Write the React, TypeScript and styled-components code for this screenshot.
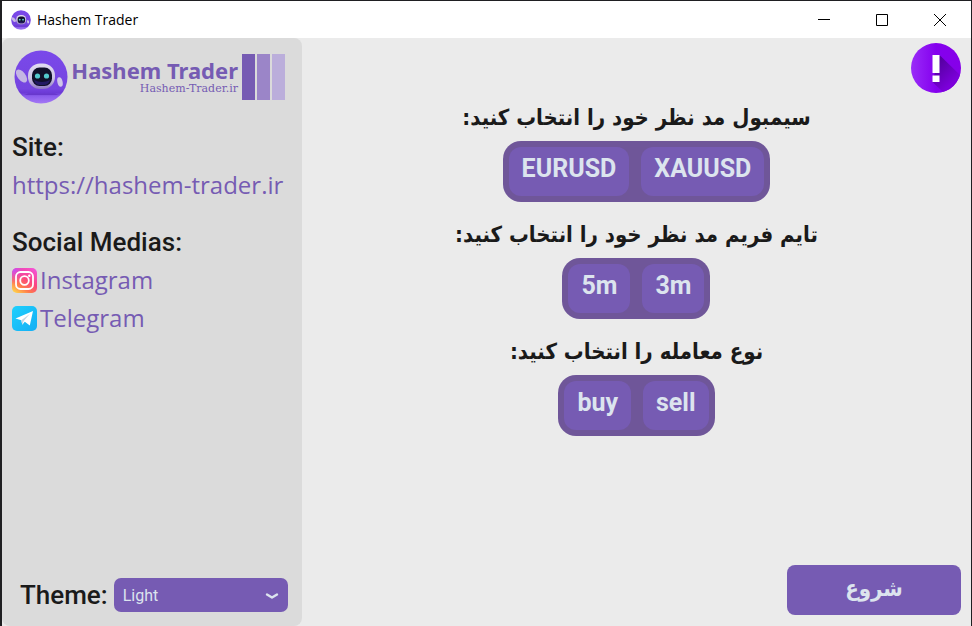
import React from "react";
import styled, { createGlobalStyle } from "styled-components";

const color = {
  purple: "#765bb3",
  purpleDark: "#6f5699",
  onPurple: "#dce4ee",
  ink: "#1a1a1a",
  side: "#dbdbdb",
  page: "#ebebeb",
};

const GlobalStyle = createGlobalStyle`
  * { box-sizing: border-box; }
  body { margin: 0; background: ${color.page}; }
  button, select { font: inherit; border: 0; cursor: pointer; }
`;

const Window = styled.div`
  min-height: 100vh;
  display: flex;
  flex-direction: column;
  border: solid #1f1f22;
  border-width: 1px 1px 0 2px;
  background: ${color.page};
  color: ${color.ink};
  font-family: Roboto, "DejaVu Sans", sans-serif;
`;

const TitleBar = styled.header`
  display: flex;
  align-items: center;
  gap: 6px;
  height: 37px;
  padding: 0 2px 0 9px;
  background: #fff;
  color: #000;
  font: 14px/20px "Open Sans", sans-serif;
`;

const WindowButtons = styled.div`
  display: flex;
  align-self: stretch;
  margin-left: auto;
`;

const WindowButton = styled.button`
  width: 58px;
  display: grid;
  place-items: center;
  padding: 0;
  background: transparent;
`;

const Body = styled.div`
  flex: 1;
  display: flex;
`;

const Sidebar = styled.aside`
  flex: 0 0 300px;
  display: flex;
  flex-direction: column;
  padding: 12px 14px 14px 10px;
  border-radius: 8px;
  background: ${color.side};
`;

const Brand = styled.div`
  display: flex;
  align-items: center;
  padding: 0 3px 0 2px;
  margin-bottom: 24px;
  color: ${color.purple};
`;

const BrandText = styled.div`
  flex: 1;
  display: flex;
  flex-direction: column;
  align-items: flex-end;
  margin-right: 4px;
  white-space: nowrap;
`;

const BrandName = styled.div`
  font: 700 22px/24px "Noto Sans", sans-serif;
`;

const BrandSite = styled.div`
  font: 11px/14px "DejaVu Serif", serif;
`;

const Bars = styled.div`
  display: flex;
  gap: 2px;
`;

const Bar = styled.span<{ $shade: string }>`
  width: 13px;
  height: 46px;
  background: ${(p) => p.$shade};
`;

const SideSection = styled.section`
  margin-bottom: 19px;
`;

const SideHeading = styled.h2`
  margin: 0;
  font: 500 26px/38px Roboto, sans-serif;
`;

const SideLink = styled.a`
  display: flex;
  align-items: center;
  gap: 3px;
  color: ${color.purple};
  font: 24px/38px "Open Sans", sans-serif;
  text-decoration: none;
`;

const ThemeRow = styled.div`
  display: flex;
  align-items: center;
  gap: 6px;
  margin-top: auto;
  padding-left: 8px;
`;

const ThemeLabel = styled.label`
  font: 500 26px/34px Roboto, sans-serif;
`;

const SelectBox = styled.div`
  position: relative;
  flex: 1;
  svg {
    position: absolute;
    right: 9px;
    top: 13px;
    pointer-events: none;
  }
`;

const ThemeSelect = styled.select`
  display: block;
  width: 100%;
  height: 34px;
  padding: 0 28px 0 9px;
  appearance: none;
  border-radius: 7px;
  background: ${color.purple};
  color: ${color.onPurple};
  font: 16px Roboto, sans-serif;
`;

const Main = styled.main`
  flex: 1;
  display: flex;
  flex-direction: column;
  padding: 5px 10px 11px;
`;

const InfoButton = styled.button`
  align-self: flex-end;
  width: 50px;
  height: 50px;
  padding: 0;
  border-radius: 50%;
  background: transparent;
`;

const Choices = styled.div`
  display: flex;
  flex-direction: column;
  align-items: center;
  gap: 10px;
  margin-top: 2px;
`;

const Choice = styled.section`
  display: flex;
  flex-direction: column;
  align-items: center;
`;

const Question = styled.h2`
  margin: 0;
  font: 700 22px/46px "DejaVu Sans Condensed", "DejaVu Sans", sans-serif;
`;

const Segments = styled.div`
  display: flex;
  gap: 12px;
  padding: 6px;
  border-radius: 18px;
  background: ${color.purpleDark};
`;

const Segment = styled.button`
  height: 49px;
  padding: 0 13px 6px;
  border-radius: 12px;
  background: ${color.purple};
  color: ${color.onPurple};
  font: 700 25px Roboto, sans-serif;
`;

const StartButton = styled.button`
  align-self: flex-end;
  width: 174px;
  height: 50px;
  margin-top: auto;
  padding: 0 0 4px;
  border-radius: 8px;
  background: ${color.purple};
  color: ${color.onPurple};
  font: 700 22px "DejaVu Sans Condensed", "DejaVu Sans", sans-serif;
`;

function Robot({ size, id }: { size: number; id: string }) {
  return (
    <svg width={size} height={size} viewBox="0 0 54 54" aria-hidden="true">
      <defs>
        <linearGradient id={`${id}-bg`} x1="0" y1="0" x2="0" y2="1">
          <stop offset="0" stopColor="#7a49ea" />
          <stop offset=".72" stopColor="#7544e0" />
          <stop offset=".8" stopColor="#6c3ad6" />
          <stop offset=".86" stopColor="#8a5cec" />
          <stop offset="1" stopColor="#a478f5" />
        </linearGradient>
        <linearGradient id={`${id}-shell`} x1="0" y1="0" x2="0" y2="1">
          <stop offset="0" stopColor="#e2dcf2" />
          <stop offset=".6" stopColor="#cbc1e2" />
          <stop offset="1" stopColor="#8e77c4" />
        </linearGradient>
      </defs>
      <circle cx="27" cy="27" r="26.5" fill={`url(#${id}-bg)`} />
      <path d="M10 45h35l-4-1.500H14z" fill="#5c2bc0" opacity=".6" />
      <ellipse cx="7.500" cy="26" rx="4" ry="7.500" transform="rotate(-38 7.500 26)" fill="#c4b6e3" />
      <ellipse cx="46" cy="32" rx="2.600" ry="4.800" transform="rotate(-14 46 32)" fill="#cfc5e8" />
      <rect x="14" y="13.500" width="27" height="25.500" rx="12" fill={`url(#${id}-shell)`} />
      <rect x="18" y="17.500" width="20" height="18.500" rx="7.500" fill="#11102a" />
      <path d="M20 30q8 4 16 0-1 5-7 5h-3q-5 0-6-5z" fill="#231a63" />
      <circle cx="23.500" cy="26" r="2.600" fill="#53c9cd" />
      <circle cx="32.500" cy="26" r="2.600" fill="#53c9cd" />
    </svg>
  );
}

function InstagramIcon() {
  return (
    <svg width="25" height="25" viewBox="0 0 25 25" aria-hidden="true">
      <defs>
        <linearGradient id="ig-base" x1=".1" y1="1" x2=".8" y2="0">
          <stop offset="0" stopColor="#ffd84a" />
          <stop offset=".3" stopColor="#ff7a4c" />
          <stop offset=".6" stopColor="#fa4580" />
          <stop offset="1" stopColor="#f451d4" />
        </linearGradient>
        <radialGradient id="ig-corner" cx=".05" cy=".05" r=".6">
          <stop offset="0" stopColor="#c250ff" />
          <stop offset="1" stopColor="#f24bc4" stopOpacity="0" />
        </radialGradient>
      </defs>
      <rect width="25" height="25" rx="5" fill="url(#ig-base)" />
      <rect width="25" height="25" rx="5" fill="url(#ig-corner)" />
      <rect x="4" y="4" width="17" height="17" rx="4.500" fill="none" stroke="#fff" strokeWidth="1.800" />
      <circle cx="12.500" cy="12.500" r="4.300" fill="none" stroke="#fff" strokeWidth="1.800" />
      <circle cx="17.300" cy="7.800" r="1.200" fill="#fff" />
    </svg>
  );
}

function TelegramIcon() {
  return (
    <svg width="25" height="25" viewBox="0 0 25 25" aria-hidden="true">
      <defs>
        <linearGradient id="tg-base" x1="0" y1="0" x2="1" y2="1">
          <stop offset="0" stopColor="#1fd0fd" />
          <stop offset="1" stopColor="#14aef4" />
        </linearGradient>
      </defs>
      <rect width="25" height="25" rx="5" fill="url(#tg-base)" />
      <path d="M3.500 12.500 21 5l-3.200 14.500-5-3.700-2.500 3-1-4.500z" fill="#fff" />
      <path d="m9.300 14.300 8.700-6.500-6.300 7.300-1.400 3.700z" fill="#c5d5e2" />
    </svg>
  );
}

function InfoIcon() {
  return (
    <svg width="50" height="50" viewBox="0 0 50 50" aria-hidden="true">
      <defs>
        <linearGradient id="info-bg">
          <stop offset="0" stopColor="#9a2cf8" />
          <stop offset=".5" stopColor="#8400ee" />
          <stop offset="1" stopColor="#8600e8" />
        </linearGradient>
        <linearGradient id="info-shadow" gradientUnits="userSpaceOnUse" x1="25" y1="20" x2="43" y2="38">
          <stop offset="0" stopColor="#5400a0" />
          <stop offset="1" stopColor="#7c00da" />
        </linearGradient>
        <clipPath id="info-clip"><circle cx="25" cy="25" r="25" /></clipPath>
      </defs>
      <g clipPath="url(#info-clip)">
        <rect width="50" height="50" fill="url(#info-bg)" />
        <path d="M28.500 12 50 33v17H33L21.500 39z" fill="url(#info-shadow)" />
        <path d="M21.500 12h7v18h-7zM21.500 32.500h7v6.500h-7z" fill="#fff" />
      </g>
    </svg>
  );
}

const questions = [
  { text: "سیمبول مد نظر خود را انتخاب کنید:", options: ["EURUSD", "XAUUSD"] },
  { text: "تایم فریم مد نظر خود را انتخاب کنید:", options: ["5m", "3m"] },
  { text: "نوع معامله را انتخاب کنید:", options: ["buy", "sell"] },
];

export default function App() {
  return (
    <Window>
      <GlobalStyle />
      <TitleBar>
        <Robot size={20} id="title-robot" />
        Hashem Trader
        <WindowButtons>
          <WindowButton aria-label="Minimize">
            <svg width="12" height="12"><path d="M0 5.500h12" stroke="#000" /></svg>
          </WindowButton>
          <WindowButton aria-label="Maximize">
            <svg width="12" height="12"><path d="M.5.5h11v11H.5z" fill="none" stroke="#000" /></svg>
          </WindowButton>
          <WindowButton aria-label="Close">
            <svg width="12" height="12"><path d="m0 0 12 12M12 0 0 12" stroke="#000" /></svg>
          </WindowButton>
        </WindowButtons>
      </TitleBar>
      <Body>
        <Sidebar>
          <Brand>
            <Robot size={54} id="brand-robot" />
            <BrandText>
              <BrandName>Hashem Trader</BrandName>
              <BrandSite>Hashem-Trader.ir</BrandSite>
            </BrandText>
            <Bars>
              <Bar $shade={color.purple} />
              <Bar $shade="#9b85c8" />
              <Bar $shade="#bbaedb" />
            </Bars>
          </Brand>
          <SideSection>
            <SideHeading>Site:</SideHeading>
            <SideLink href="https://hashem-trader.ir">https://hashem-trader.ir</SideLink>
          </SideSection>
          <SideSection>
            <SideHeading>Social Medias:</SideHeading>
            <SideLink href="#instagram"><InstagramIcon />Instagram</SideLink>
            <SideLink href="#telegram"><TelegramIcon />Telegram</SideLink>
          </SideSection>
          <ThemeRow>
            <ThemeLabel htmlFor="theme">Theme:</ThemeLabel>
            <SelectBox>
              <ThemeSelect id="theme" defaultValue="Light">
                <option>Light</option>
                <option>Dark</option>
                <option>System</option>
              </ThemeSelect>
              <svg width="14" height="10" viewBox="0 0 14 10" aria-hidden="true">
                <path d="m2 3.500 5 3 5-3" fill="none" stroke={color.onPurple} strokeWidth="2.400" strokeLinecap="round" strokeLinejoin="round" />
              </svg>
            </SelectBox>
          </ThemeRow>
        </Sidebar>
        <Main>
          <InfoButton aria-label="Information"><InfoIcon /></InfoButton>
          <Choices>
            {questions.map((q) => (
              <Choice key={q.text}>
                <Question dir="rtl" lang="fa">{q.text}</Question>
                <Segments role="group" aria-label={q.text}>
                  {q.options.map((o) => (
                    <Segment key={o} type="button">{o}</Segment>
                  ))}
                </Segments>
              </Choice>
            ))}
          </Choices>
          <StartButton type="button" lang="fa">شروع</StartButton>
        </Main>
      </Body>
    </Window>
  );
}
